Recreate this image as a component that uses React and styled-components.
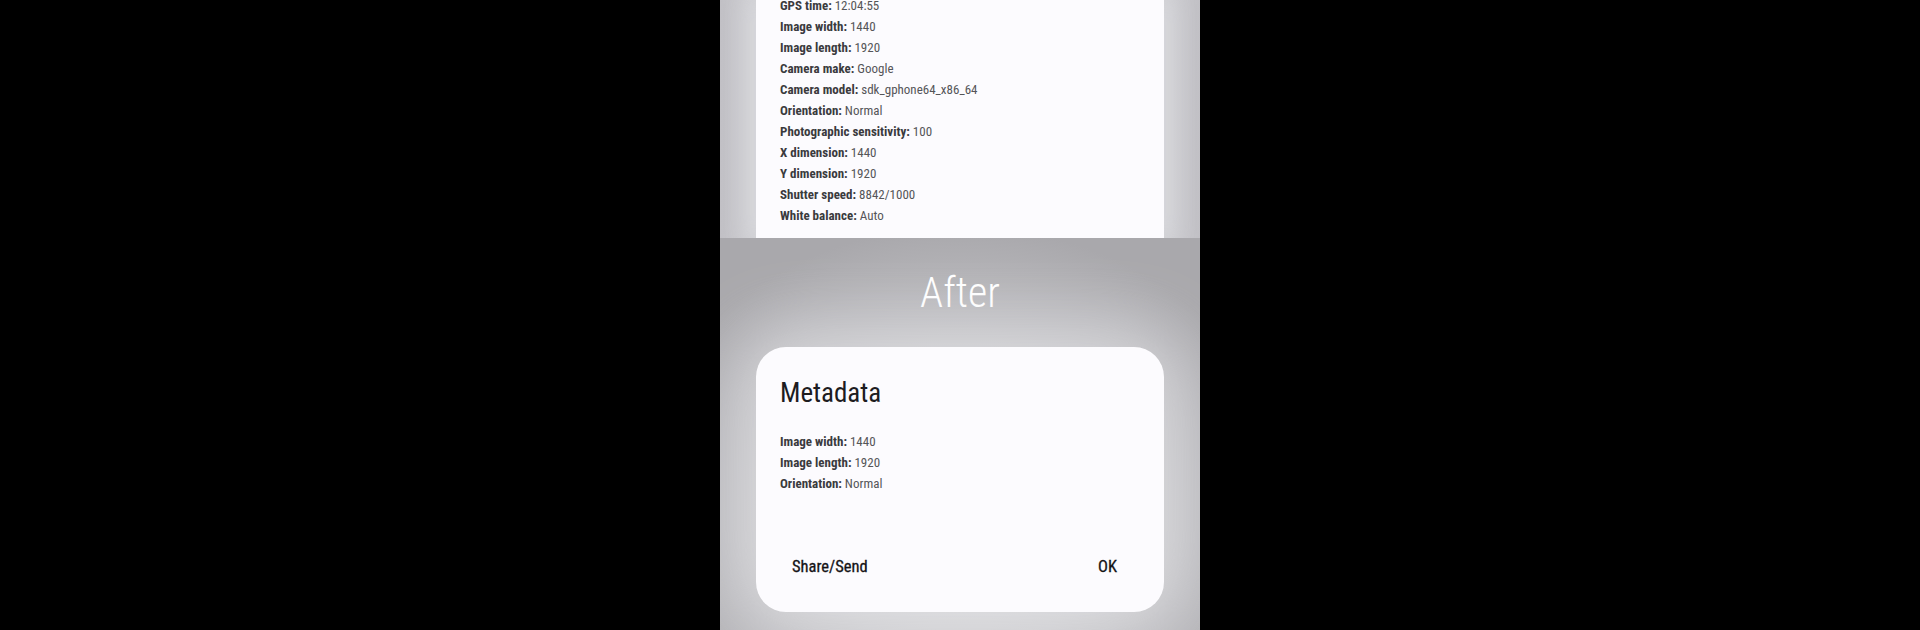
import React from "react";
import styled, { createGlobalStyle } from "styled-components";

const GlobalStyle = createGlobalStyle`
  html, body {
    margin: 0;
    padding: 0;
    background: #000;
  }
`;

const condensed = `"Roboto Condensed", "Liberation Sans Narrow", "DejaVu Sans Condensed", sans-serif`;

//Styled components-----------------------------------------
const Stage = styled.div`
  width: 1920px;
  height: 630px;
  display: flex;
  justify-content: center;
  overflow: hidden;
  background: #000;
`;

const Phone = styled.div`
  width: 480px;
  height: 630px;
  display: flex;
  flex-direction: column;
  overflow: hidden;
`;

const BeforePart = styled.div`
  height: 238px;
  flex-shrink: 0;
  display: flex;
  justify-content: center;
  overflow: hidden;
  background: linear-gradient(
    90deg,
    #c1c0c5 0%,
    #cdcdd1 6%,
    #cdcdd1 94%,
    #c1c0c5 100%
  );
`;

const AfterPart = styled.div`
  flex: 1;
  display: flex;
  flex-direction: column;
  align-items: center;
  background: radial-gradient(
    ellipse 70% 75% at 50% 72%,
    #dcdcde 0%,
    #cbcbce 45%,
    #a9a8ac 100%
  );
`;

const Caption = styled.h2`
  margin: 30px 0 0 0;
  height: 50px;
  line-height: 50px;
  font-family: ${condensed};
  font-weight: 300;
  font-size: 42px;
  color: #fff;
`;

const Card = styled.div`
  width: 408px;
  background: #fcfbfe;
  box-sizing: border-box;
  padding-left: 24px;
  padding-right: 24px;
  ${(p) =>
    p.$dialog
      ? `
    margin-top: 29px;
    height: 265px;
    border-radius: 30px;
    padding-top: 26px;
    display: flex;
    flex-direction: column;
    box-shadow: 0 0 70px 20px rgba(235, 235, 238, 0.55);
  `
      : `
    height: 238px;
    padding-top: 0;
    box-shadow: 0 0 24px 4px rgba(225, 225, 229, 0.7);
  `}
`;

const InfoList = styled.div`
  display: flex;
  flex-direction: column;
  margin-top: ${(p) => p.$offset || "0px"};
`;

const Row = styled.div`
  height: 21px;
  line-height: 21px;
  font-family: ${condensed};
  font-size: 13px;
  color: #555558;
  white-space: nowrap;
`;

const Label = styled.span`
  font-weight: 700;
  color: #3a3a3d;
`;

const Title = styled.h3`
  margin: 0 0 18px 0;
  height: 40px;
  line-height: 40px;
  font-family: ${condensed};
  font-weight: 400;
  font-size: 27px;
  color: #1d1c1f;
`;

const Actions = styled.div`
  margin-top: auto;
  height: 40px;
  margin-bottom: 26px;
  display: flex;
  justify-content: space-between;
  align-items: center;
  padding: 0 23px 0 12px;
`;

const ActionButton = styled.button`
  border: none;
  background: transparent;
  padding: 0;
  font-family: ${condensed};
  font-weight: 400;
  font-size: 16.5px;
  color: #141316;
  -webkit-text-stroke: 0.3px #141316;
  cursor: pointer;
`;
//---------------------------------------------------------

const fullInfo = [
  ["GPS time", "12:04:55"],
  ["Image width", "1440"],
  ["Image length", "1920"],
  ["Camera make", "Google"],
  ["Camera model", "sdk_gphone64_x86_64"],
  ["Orientation", "Normal"],
  ["Photographic sensitivity", "100"],
  ["X dimension", "1440"],
  ["Y dimension", "1920"],
  ["Shutter speed", "8842/1000"],
  ["White balance", "Auto"],
];

const cleanInfo = [
  ["Image width", "1440"],
  ["Image length", "1920"],
  ["Orientation", "Normal"],
];

const InfoRows = ({ items }) =>
  items.map(([label, value]) => (
    <Row key={label}>
      <Label>{label}:</Label> {value}
    </Row>
  ));

const App = () => {
  return (
    <>
      <GlobalStyle />
      <Stage>
        <Phone>
          <BeforePart>
            <Card>
              <InfoList $offset="-5px">
                <InfoRows items={fullInfo} />
              </InfoList>
            </Card>
          </BeforePart>
          <AfterPart>
            <Caption>After</Caption>
            <Card $dialog>
              <Title>Metadata</Title>
              <InfoList>
                <InfoRows items={cleanInfo} />
              </InfoList>
              <Actions>
                <ActionButton>Share/Send</ActionButton>
                <ActionButton>OK</ActionButton>
              </Actions>
            </Card>
          </AfterPart>
        </Phone>
      </Stage>
    </>
  );
};

export default App;
